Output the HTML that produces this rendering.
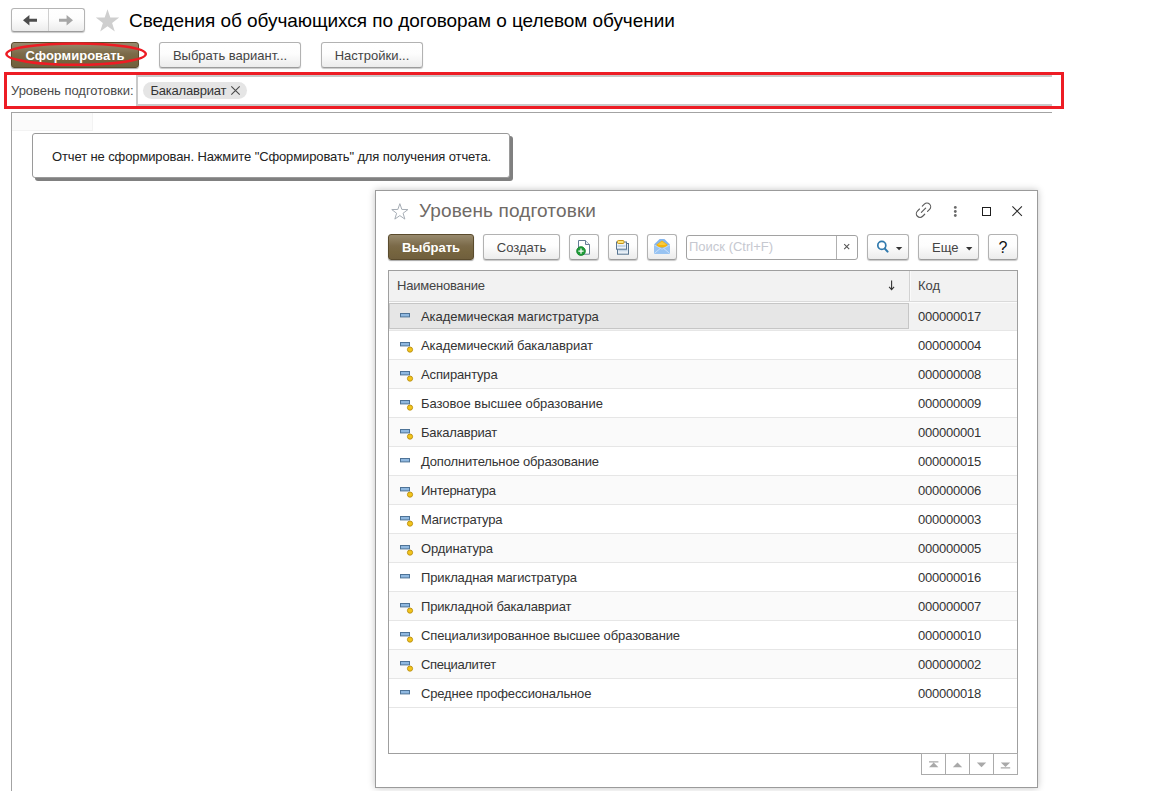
<!DOCTYPE html>
<html lang="ru">
<head>
<meta charset="utf-8">
<title>Сведения об обучающихся по договорам о целевом обучении</title>
<style>
*{box-sizing:border-box;margin:0;padding:0}
html,body{width:1152px;height:791px;overflow:hidden;background:#fff}
body{font-family:"Liberation Sans",Arial,sans-serif;font-size:13px;color:#333;position:relative}
.abs{position:absolute}
.btn{position:absolute;height:26px;border:1px solid #b2b2b2;border-bottom-color:#9c9c9c;border-radius:3px;
 background:linear-gradient(#ffffff 0%,#fdfdfd 45%,#ececec 100%);box-shadow:0 1px 1px rgba(0,0,0,.22);
 color:#444;font-size:13px;line-height:25px;text-align:center;white-space:nowrap}
.btn.primary{border-color:#5a4b2d;background:linear-gradient(#988a6d 0%,#8a7b5c 22%,#7b6a49 45%,#76653f 70%,#705f3d 100%);color:#fff;font-weight:bold;line-height:25px;box-shadow:0 1px 1px rgba(0,0,0,.35)}
.title{position:absolute;left:129px;top:10px;font-size:19px;line-height:22px;color:#000;white-space:nowrap;letter-spacing:-0.06px}
.row{position:absolute;left:0;width:628px;height:29px;border-bottom:1px solid #e6e6e6;font-size:13px;line-height:29.5px;color:#333;white-space:nowrap}
.row.alt{background:#fafafa}
.row .nm{position:absolute;left:32px;top:0}
.row .cd{position:absolute;left:529px;top:0;letter-spacing:-0.22px}
.row .ic{position:absolute;left:11px;top:11px}
.selbox{position:absolute;left:0;top:1px;width:520px;height:26px;background:#e6e6e6;border:1px solid #c6c6c6}
.sb{position:absolute;top:0;width:25px;height:22px;border:1px solid #ababab;background:#fff}
</style>
</head>
<body>

<!-- navigation -->
<div class="abs" style="left:11px;top:8px;width:74px;height:24px;border:1px solid #b4b4b4;border-bottom-color:#9c9c9c;border-radius:3px;background:linear-gradient(#fff 0%,#fdfdfd 45%,#ececec 100%);box-shadow:0 1px 1px rgba(0,0,0,.22)">
  <div class="abs" style="left:36px;top:0;width:1px;height:22px;background:#cfcfcf"></div>
  <svg class="abs" style="left:-1px;top:-1px" width="74" height="23" viewBox="0 0 74 23">
    <path d="M12 12.3 L18.4 7 V10.8 H26 V13.8 H18.4 V17.6 Z" fill="#4d4d4d"/>
    <path d="M62 12.3 L55.6 7 V10.8 H48 V13.8 H55.6 V17.6 Z" fill="#a6a6a6"/>
  </svg>
</div>
<svg class="abs" style="left:95px;top:8px" width="26" height="24" viewBox="0 0 26 24">
  <polygon points="12.5,1.2 15.3,9.5 24.2,9.6 17.1,14.9 19.8,23.4 12.5,18.2 5.2,23.4 7.9,14.9 0.8,9.6 9.7,9.5" fill="#cfcfcf"/>
</svg>
<div class="title">Сведения об обучающихся по договорам о целевом обучении</div>

<!-- command bar -->
<div class="btn primary" style="left:11px;top:42px;width:128px">Сформировать</div>
<div class="btn" style="left:159px;top:42px;width:142px">Выбрать вариант...</div>
<div class="btn" style="left:321px;top:42px;width:102px">Настройки...</div>
<svg class="abs" style="left:2px;top:38px" width="150" height="32" viewBox="0 0 150 32">
  <ellipse cx="74.1" cy="16.1" rx="69.7" ry="10.7" fill="none" stroke="#ed1c24" stroke-width="2.5"/>
</svg>

<!-- filter field -->
<div class="abs" style="left:11px;top:83px;font-size:13px;line-height:16px;color:#4a4a4a;white-space:nowrap;letter-spacing:-0.03px">Уровень подготовки:</div>
<div class="abs" style="left:136px;top:75px;width:916px;height:31px;border:2px solid #c9c9c9;border-right:0;background:#fff"></div>
<div class="abs" style="left:143px;top:82px;width:104px;height:17px;border-radius:9px;background:#e5e5e5;font-size:13px;line-height:17px;color:#333;white-space:nowrap;padding-left:7.5px;letter-spacing:-0.22px">Бакалавриат</div>
<svg class="abs" style="left:230px;top:85px" width="11" height="11" viewBox="0 0 11 11"><path d="M1.3 1.3 L9.7 9.7 M9.7 1.3 L1.3 9.7" stroke="#4a4a4a" stroke-width="1.1" fill="none"/></svg>
<div class="abs" style="left:4px;top:72px;width:1060px;height:37px;border:3px solid #ed1c24"></div>

<!-- spreadsheet area -->
<div class="abs" style="left:11px;top:112px;width:1041px;height:1px;background:#a3a3a3"></div>
<div class="abs" style="left:11px;top:112px;width:1px;height:679px;background:#a3a3a3"></div>
<div class="abs" style="left:12px;top:113px;width:81px;height:18px;background:#fbfbfb;border-right:1px solid #f3f3f3;border-bottom:1px solid #f3f3f3"></div>
<div class="abs" style="left:32px;top:133px;width:478px;height:45px;border:1px solid #9a9a9a;border-radius:3px;background:#fff;box-shadow:3px 3px 0 #808080;font-size:13px;line-height:45px;color:#222;padding-left:19px;white-space:nowrap;letter-spacing:-0.115px">Отчет не сформирован. Нажмите "Сформировать" для получения отчета.</div>

<!-- dialog -->
<div class="abs" id="dlg" style="left:375px;top:190px;width:663px;height:598px;border:1px solid #9b9b9b;background:#fff;box-shadow:0 0 7px rgba(0,0,0,.24)">
  <svg class="abs" style="left:15px;top:11px" width="20" height="20" viewBox="0 0 20 20">
    <polygon points="8.85,1.70 10.85,7.45 16.93,7.57 12.08,11.25 13.85,17.08 8.85,13.60 3.85,17.08 5.62,11.25 0.77,7.57 6.85,7.45" fill="none" stroke="#a6adb5" stroke-width="1"/>
  </svg>
  <div class="abs" style="left:43px;top:9px;font-size:19px;line-height:22px;color:#6f6a66;white-space:nowrap;letter-spacing:0.13px">Уровень подготовки</div>

  <!-- header icons -->
  <svg class="abs" style="left:538px;top:10px" width="20" height="20" viewBox="0 0 20 20" fill="none" stroke="#5c5c5c" stroke-width="1.15" stroke-linecap="round">
    <g transform="translate(9.5 9.2) rotate(-45)">
      <path d="M2 -3.7 H4.9 a3.7 3.7 0 0 1 0 7.4 H2"/>
      <path d="M-2 -3.7 H-4.9 a3.7 3.7 0 0 0 0 7.4 H-2"/>
      <path d="M-3 0 H3"/>
    </g>
  </svg>
  <svg class="abs" style="left:575px;top:13px" width="8" height="16" viewBox="0 0 8 16"><circle cx="4.3" cy="3.4" r="1.4" fill="#6a6a6a"/><circle cx="4.3" cy="7.5" r="1.4" fill="#6a6a6a"/><circle cx="4.3" cy="11.5" r="1.4" fill="#6a6a6a"/></svg>
  <div class="abs" style="left:606px;top:16px;width:9px;height:9px;border:1px solid #1e1e1e"></div>
  <svg class="abs" style="left:636px;top:15px" width="11" height="11" viewBox="0 0 11 11"><path d="M0.4 0.4 L9.9 9.9 M9.9 0.4 L0.4 9.9" stroke="#2a2a2a" stroke-width="1.05"/></svg>

  <!-- toolbar -->
  <div class="btn primary" style="left:12px;top:43px;width:86px">Выбрать</div>
  <div class="btn" style="left:107px;top:43px;width:77px">Создать</div>
  <div class="btn" id="b1" style="left:193px;top:43px;width:30px">
    <svg class="abs" style="left:6px;top:4px" width="16" height="17" viewBox="0 0 16 17">
      <path d="M2.5 1.5 H9.5 L13.5 5.5 V15.2 H2.5 Z" fill="#fff" stroke="#667d96" stroke-width="1"/>
      <path d="M9.5 1.5 V5.5 H13.5" fill="#e8eef5" stroke="#667d96" stroke-width="1"/>
      <circle cx="5" cy="12.1" r="4.5" fill="#1f9c3a"/>
      <circle cx="5" cy="12.1" r="4.4" fill="none" stroke="#12802b" stroke-width="0.7"/>
      <path d="M5 9.5 V14.7 M2.4 12.1 H7.6" stroke="#fff" stroke-width="1.25"/>
    </svg>
  </div>
  <div class="btn" id="b2" style="left:232px;top:43px;width:30px">
    <svg class="abs" style="left:5px;top:4px" width="16" height="17" viewBox="0 0 16 17">
      <rect x="3.5" y="4.5" width="11" height="10.7" fill="#e9f0f7" stroke="#587591" stroke-width="1"/>
      <rect x="4.5" y="9.3" width="9" height="3" fill="#c5d6e6"/>
      <rect x="2.5" y="3" width="10" height="7.2" fill="#eef3f9" stroke="#587591" stroke-width="1"/>
      <rect x="3.5" y="6" width="8" height="2" fill="#c5d6e6"/>
      <rect x="3.5" y="1.5" width="6.4" height="3" rx="0.8" fill="#fbe57c" stroke="#c9971a" stroke-width="1"/>
    </svg>
  </div>
  <div class="btn" id="b3" style="left:271px;top:43px;width:30px">
    <svg class="abs" style="left:6px;top:4px" width="17" height="16" viewBox="0 0 17 16">
      <path d="M0 5.6 L5.6 0 H10.4 L16 5.6 V13.8 Q16 14.8 15 14.8 H1 Q0 14.8 0 13.8 Z" fill="#86b6ee"/>
      <path d="M2.4 5.8 L8 1.6 L13.6 5.8 L12.8 7.6 Q8 9.4 3.2 7.6 Z" fill="#f4b40c"/>
      <path d="M3.6 5.6 L8 2.4 L12.4 5.6 Q8 6.6 3.6 5.6 Z" fill="#fbd24e" opacity=".75"/>
      <path d="M0 5.8 L8 10.2 L16 5.8 V13.8 Q16 14.8 15 14.8 H1 Q0 14.8 0 13.8 Z" fill="#98c3f2"/>
      <path d="M0.5 14.3 L6.3 9.4 M15.5 14.3 L9.7 9.4" stroke="#d3e6fb" stroke-width="0.8"/>
      <path d="M0 5.8 L8 10.2 L16 5.8" fill="none" stroke="#cde2fa" stroke-width="0.8"/>
    </svg>
  </div>
  <div class="abs" style="left:310px;top:44px;width:172px;height:25px;border:1px solid #a2a2a2;border-radius:3px;background:#fff">
    <div class="abs" style="left:2px;top:0;font-size:13px;line-height:22px;color:#c6c8d0;white-space:nowrap">Поиск (Ctrl+F)</div>
    <div class="abs" style="left:149px;top:0;width:1px;height:23px;background:#b0b0b0"></div>
    <svg class="abs" style="left:156px;top:7px" width="8" height="8" viewBox="0 0 8 8"><path d="M1.2 1.2 L6.2 6.2 M6.2 1.2 L1.2 6.2" stroke="#555" stroke-width="1.05"/></svg>
  </div>
  <div class="btn" id="b4" style="left:491px;top:43px;width:42px">
    <svg class="abs" style="left:7px;top:4px" width="30" height="16" viewBox="0 0 30 16">
      <circle cx="6.8" cy="6.4" r="4" fill="#fff" stroke="#2f79ad" stroke-width="1.7"/>
      <path d="M9.8 9.6 L12.6 12.6" stroke="#2f79ad" stroke-width="2.1" stroke-linecap="round"/>
      <path d="M20.9 8 H27.3 L24.1 11.2 Z" fill="#333"/>
    </svg>
  </div>
  <div class="btn" style="left:542px;top:43px;width:61px;text-align:left;padding-left:13px">Еще
    <svg class="abs" style="left:47px;top:12px" width="7" height="4" viewBox="0 0 7 4"><path d="M0 0 H6.4 L3.2 3.4 Z" fill="#333"/></svg>
  </div>
  <div class="btn" style="left:612px;top:43px;width:30px;color:#111;font-size:16px;line-height:25px">?</div>

  <!-- table -->
  <div class="abs" id="tbl" style="left:12px;top:79px;width:630px;height:484px;border:1px solid #9f9f9f;background:#fff">
    <div class="abs" style="left:0;top:0;width:628px;height:31px;background:#f2f2f2;border-bottom:1px solid #dadada"></div>
    <div class="abs" style="left:520px;top:0;width:1px;height:30px;background:#d2d2d2"></div>
    <div class="abs" style="left:521px;top:0;width:1px;height:30px;background:#fafafa"></div>
    <div class="abs" style="left:8px;top:0;font-size:13px;line-height:30px;color:#444;letter-spacing:-0.2px">Наименование</div>
    <div class="abs" style="left:529px;top:0;font-size:13px;line-height:30px;color:#444">Код</div>
    <svg class="abs" style="left:499px;top:9px" width="8" height="11" viewBox="0 0 8 11"><path d="M3.6 0.5 V9.5 M1.1 6.9 L3.6 9.6 L6.1 6.9" fill="none" stroke="#333" stroke-width="1.1"/></svg>
    <div class="row alt" style="top:31px;background:#f2f2f2"><div class="abs" style="left:0;top:0;width:628px;height:1px;background:#fbfbfb"></div><div class="selbox"></div><svg class="ic" width="16" height="14" viewBox="0 0 16 14"><rect x="0.5" y="0.5" width="9" height="3.4" fill="#8fb8e0" stroke="#4e7397" stroke-width="1"/></svg><span class="nm" style="letter-spacing:-0.046px">Академическая магистратура</span><span class="cd">000000017</span></div>
    <div class="row" style="top:60px"><svg class="ic" width="16" height="14" viewBox="0 0 16 14"><rect x="0.5" y="0.5" width="9" height="3.4" fill="#8fb8e0" stroke="#4e7397" stroke-width="1"/><circle cx="10" cy="7.6" r="2.6" fill="#f2c41c" stroke="#b98d10" stroke-width="0.9"/></svg><span class="nm" style="letter-spacing:-0.08px">Академический бакалавриат</span><span class="cd">000000004</span></div>
    <div class="row alt" style="top:89px"><svg class="ic" width="16" height="14" viewBox="0 0 16 14"><rect x="0.5" y="0.5" width="9" height="3.4" fill="#8fb8e0" stroke="#4e7397" stroke-width="1"/><circle cx="10" cy="7.6" r="2.6" fill="#f2c41c" stroke="#b98d10" stroke-width="0.9"/></svg><span class="nm" style="letter-spacing:-0.136px">Аспирантура</span><span class="cd">000000008</span></div>
    <div class="row" style="top:118px"><svg class="ic" width="16" height="14" viewBox="0 0 16 14"><rect x="0.5" y="0.5" width="9" height="3.4" fill="#8fb8e0" stroke="#4e7397" stroke-width="1"/><circle cx="10" cy="7.6" r="2.6" fill="#f2c41c" stroke="#b98d10" stroke-width="0.9"/></svg><span class="nm" style="letter-spacing:-0.019px">Базовое высшее образование</span><span class="cd">000000009</span></div>
    <div class="row alt" style="top:147px"><svg class="ic" width="16" height="14" viewBox="0 0 16 14"><rect x="0.5" y="0.5" width="9" height="3.4" fill="#8fb8e0" stroke="#4e7397" stroke-width="1"/><circle cx="10" cy="7.6" r="2.6" fill="#f2c41c" stroke="#b98d10" stroke-width="0.9"/></svg><span class="nm" style="letter-spacing:-0.182px">Бакалавриат</span><span class="cd">000000001</span></div>
    <div class="row" style="top:176px"><svg class="ic" width="16" height="14" viewBox="0 0 16 14"><rect x="0.5" y="0.5" width="9" height="3.4" fill="#8fb8e0" stroke="#4e7397" stroke-width="1"/></svg><span class="nm" style="letter-spacing:-0.162px">Дополнительное образование</span><span class="cd">000000015</span></div>
    <div class="row alt" style="top:205px"><svg class="ic" width="16" height="14" viewBox="0 0 16 14"><rect x="0.5" y="0.5" width="9" height="3.4" fill="#8fb8e0" stroke="#4e7397" stroke-width="1"/><circle cx="10" cy="7.6" r="2.6" fill="#f2c41c" stroke="#b98d10" stroke-width="0.9"/></svg><span class="nm" style="letter-spacing:-0.291px">Интернатура</span><span class="cd">000000006</span></div>
    <div class="row" style="top:234px"><svg class="ic" width="16" height="14" viewBox="0 0 16 14"><rect x="0.5" y="0.5" width="9" height="3.4" fill="#8fb8e0" stroke="#4e7397" stroke-width="1"/><circle cx="10" cy="7.6" r="2.6" fill="#f2c41c" stroke="#b98d10" stroke-width="0.9"/></svg><span class="nm" style="letter-spacing:-0.208px">Магистратура</span><span class="cd">000000003</span></div>
    <div class="row alt" style="top:263px"><svg class="ic" width="16" height="14" viewBox="0 0 16 14"><rect x="0.5" y="0.5" width="9" height="3.4" fill="#8fb8e0" stroke="#4e7397" stroke-width="1"/><circle cx="10" cy="7.6" r="2.6" fill="#f2c41c" stroke="#b98d10" stroke-width="0.9"/></svg><span class="nm" style="letter-spacing:-0.1px">Ординатура</span><span class="cd">000000005</span></div>
    <div class="row" style="top:292px"><svg class="ic" width="16" height="14" viewBox="0 0 16 14"><rect x="0.5" y="0.5" width="9" height="3.4" fill="#8fb8e0" stroke="#4e7397" stroke-width="1"/></svg><span class="nm" style="letter-spacing:-0.13px">Прикладная магистратура</span><span class="cd">000000016</span></div>
    <div class="row alt" style="top:321px"><svg class="ic" width="16" height="14" viewBox="0 0 16 14"><rect x="0.5" y="0.5" width="9" height="3.4" fill="#8fb8e0" stroke="#4e7397" stroke-width="1"/><circle cx="10" cy="7.6" r="2.6" fill="#f2c41c" stroke="#b98d10" stroke-width="0.9"/></svg><span class="nm" style="letter-spacing:-0.173px">Прикладной бакалавриат</span><span class="cd">000000007</span></div>
    <div class="row" style="top:350px"><svg class="ic" width="16" height="14" viewBox="0 0 16 14"><rect x="0.5" y="0.5" width="9" height="3.4" fill="#8fb8e0" stroke="#4e7397" stroke-width="1"/><circle cx="10" cy="7.6" r="2.6" fill="#f2c41c" stroke="#b98d10" stroke-width="0.9"/></svg><span class="nm" style="letter-spacing:-0.122px">Специализированное высшее образование</span><span class="cd">000000010</span></div>
    <div class="row alt" style="top:379px"><svg class="ic" width="16" height="14" viewBox="0 0 16 14"><rect x="0.5" y="0.5" width="9" height="3.4" fill="#8fb8e0" stroke="#4e7397" stroke-width="1"/><circle cx="10" cy="7.6" r="2.6" fill="#f2c41c" stroke="#b98d10" stroke-width="0.9"/></svg><span class="nm" style="letter-spacing:-0.382px">Специалитет</span><span class="cd">000000002</span></div>
    <div class="row" style="top:408px"><svg class="ic" width="16" height="14" viewBox="0 0 16 14"><rect x="0.5" y="0.5" width="9" height="3.4" fill="#8fb8e0" stroke="#4e7397" stroke-width="1"/></svg><span class="nm" style="letter-spacing:-0.146px">Среднее профессиональное</span><span class="cd">000000018</span></div>
  </div>

  <!-- scroll buttons -->
  <div class="abs" style="left:545px;top:562px;width:97px;height:22px">
    <div class="sb" style="left:0"><svg width="23" height="19" viewBox="0 0 23 19"><path d="M7 7.3 H16.4 V8.5 H7 Z M7 13.3 L11.7 8.6 L16.4 13.3 Z" fill="#a9a9a9"/></svg></div>
    <div class="sb" style="left:24px"><svg width="23" height="19" viewBox="0 0 23 19"><path d="M6.8 13.3 L11.5 8.4 L16.2 13.3 Z" fill="#a9a9a9"/></svg></div>
    <div class="sb" style="left:48px"><svg width="23" height="19" viewBox="0 0 23 19"><path d="M6.8 8.5 H16.2 L11.5 13.3 Z" fill="#a9a9a9"/></svg></div>
    <div class="sb" style="left:72px"><svg width="23" height="19" viewBox="0 0 23 19"><path d="M6.8 8.4 H16.2 L11.5 13 Z M6.8 13.2 H16.2 V14.4 H6.8 Z" fill="#a9a9a9"/></svg></div>
  </div>
</div>

</body>
</html>
